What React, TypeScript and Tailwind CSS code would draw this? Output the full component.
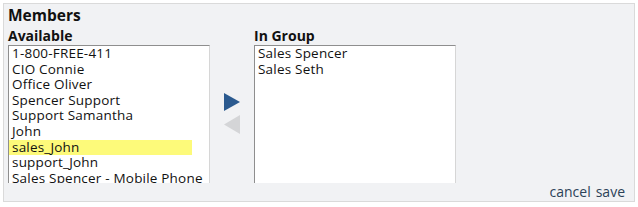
const available = [
  '1-800-FREE-411',
  'CIO Connie',
  'Office Oliver',
  'Spencer Support',
  'Support Samantha',
  'John',
  'sales_John',
  'support_John',
  'Sales Spencer - Mobile Phone',
];

const inGroup = ['Sales Spencer', 'Sales Seth'];

function ListBox({ items, selected }: { items: string[]; selected?: string }) {
  return (
    <div className="h-[138px] w-[202px] overflow-hidden border-l border-t border-r border-l-[#8e8e8e] border-t-[#8e8e8e] border-r-[#d6d6d6] bg-white">
      {items.map((item) => (
        <div
          key={item}
          className={
            'w-[183px] whitespace-nowrap pl-[3px] text-[13.5px] leading-[15.6px] tracking-[0.2px] text-[#111] ' +
            (item === selected ? 'bg-[#fdfa7a]' : '')
          }
        >
          {item}
        </div>
      ))}
    </div>
  );
}

export default function App() {
  return (
    <div className="h-[207px] w-[638px] bg-white p-[3px] font-['Open_Sans',sans-serif]">
      <div className="flex h-[199px] flex-col border border-[#dadada] bg-[#f1f2f4] pl-[4px]">
        <h2 className="mt-[2px] text-[15.5px] font-bold leading-[19px] text-[#111]">Members</h2>
        <div className="flex">
          <div className="flex flex-col">
            <h3 className="mt-[2px] text-[14px] font-bold leading-[18px] text-[#111]">Available</h3>
            <ListBox items={available} selected="sales_John" />
          </div>
          <div className="flex w-[44px] flex-col items-center pt-[68px]">
            <svg width="18" height="18" viewBox="0 0 18 18" className="ml-[-1px]">
              <polygon points="1,0 17,9 1,18" fill="#2b5a8f" />
            </svg>
            <svg width="18" height="19" viewBox="0 0 18 19" className="mt-[4px] ml-[-1px]">
              <polygon points="17,0 1,9.5 17,19" fill="#d4d5d7" />
            </svg>
          </div>
          <div className="flex flex-col">
            <h3 className="mt-[2px] text-[14px] font-bold leading-[18px] text-[#111]">In Group</h3>
            <ListBox items={inGroup} />
          </div>
        </div>
        <div className="mt-auto flex justify-end gap-[5px] pr-[9px] pb-[2px] text-[14px] leading-[18px] text-[#2c4258]">
          <span>cancel</span>
          <span>save</span>
        </div>
      </div>
    </div>
  );
}
